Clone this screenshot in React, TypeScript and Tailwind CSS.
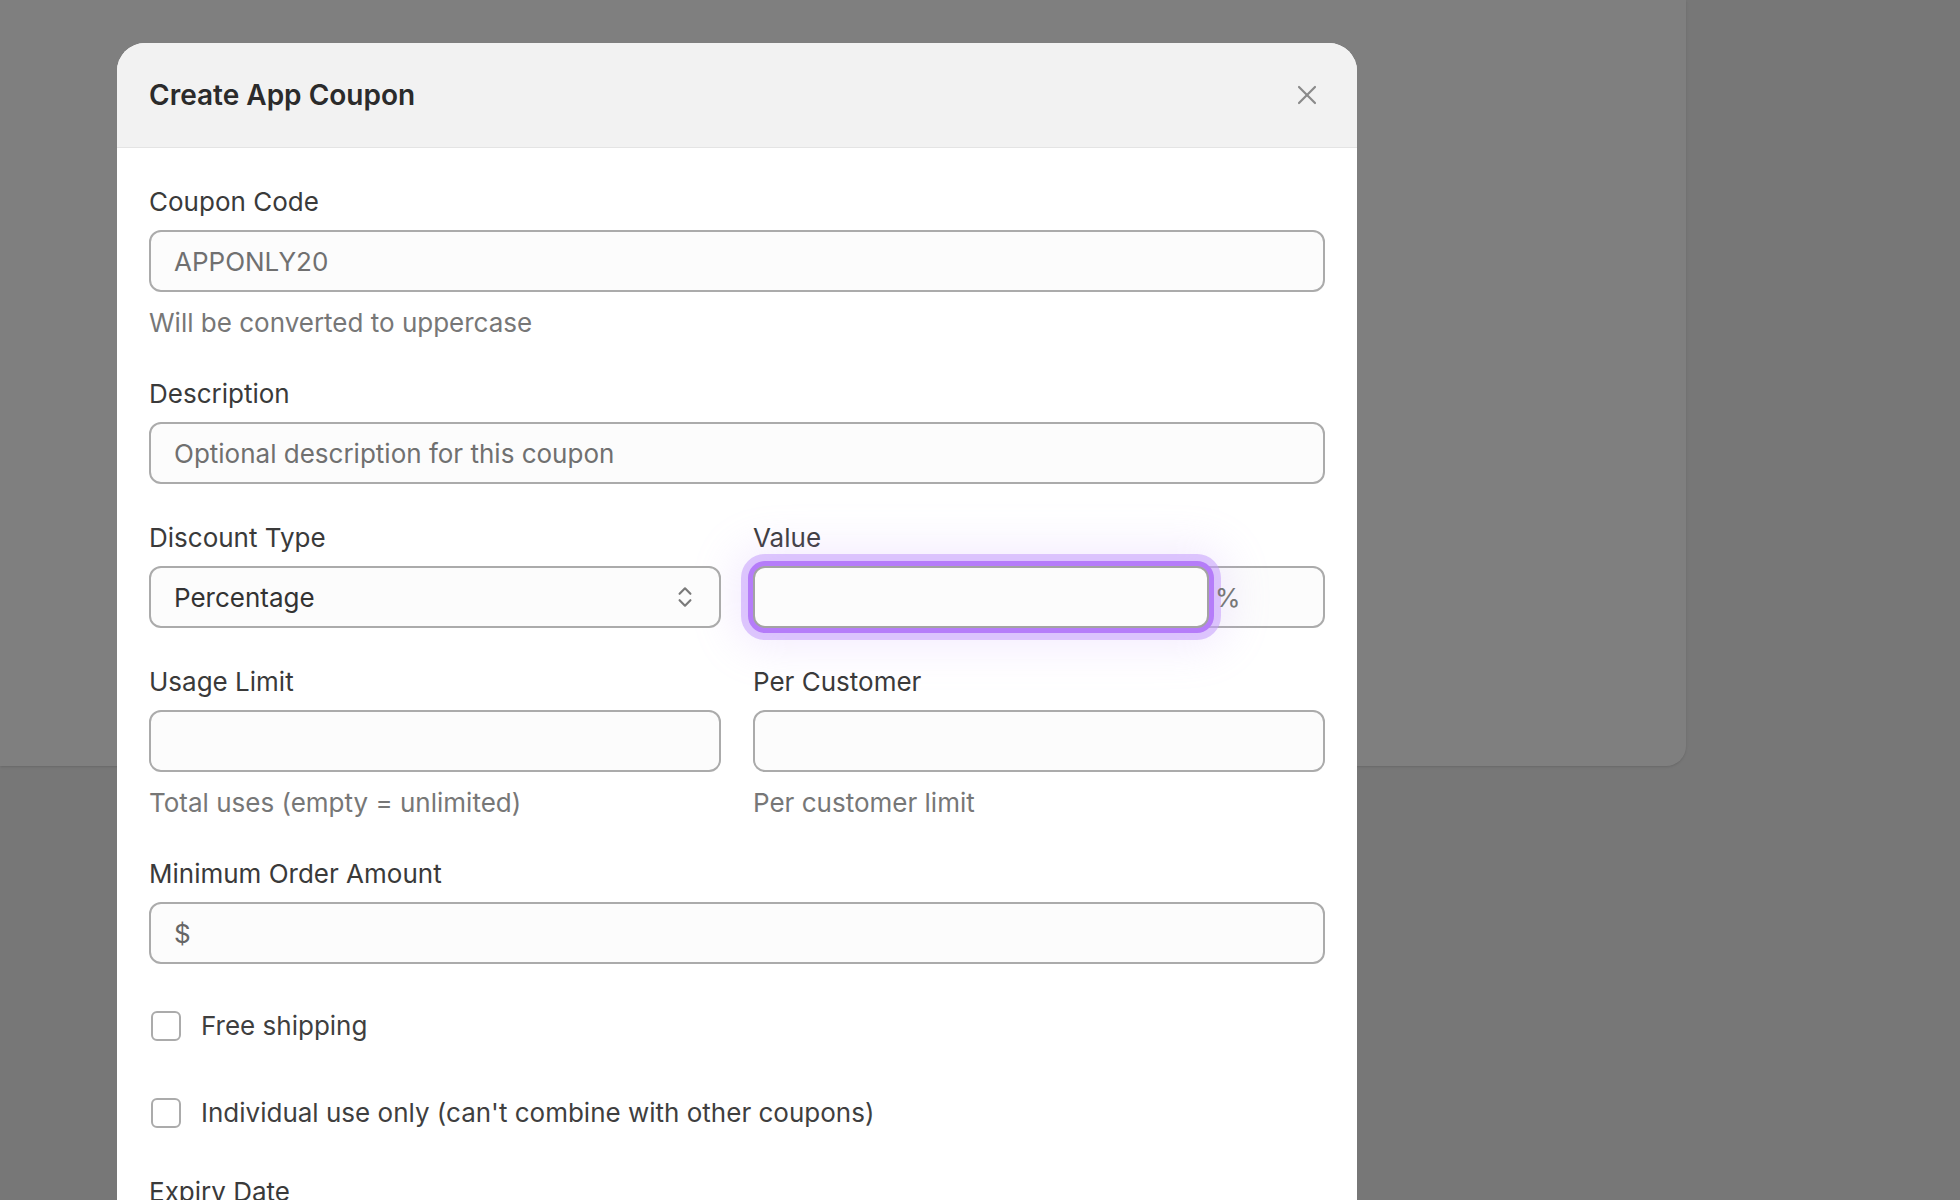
import React from "react";
import { X, ChevronsUpDown } from "lucide-react";

const font = { fontFamily: "Inter, 'Noto Sans', sans-serif" };

function Label({ children }: { children: React.ReactNode }) {
  return (
    <label className="block text-[26px] leading-[35px] text-[#3a3a3a] mb-[11px]">
      {children}
    </label>
  );
}

function Help({ children }: { children: React.ReactNode }) {
  return <p className="mt-[13px] text-[26px] leading-[35px] text-[#777777]">{children}</p>;
}

const inputCls =
  "block w-full h-[62px] rounded-[12px] border-2 border-[#ababab] bg-[#fcfcfc] px-[23px] text-[26px] text-[#333] placeholder:text-[#707070] outline-none";

function Checkbox({ label }: { label: string }) {
  return (
    <label className="flex items-center gap-[20px] py-2 text-[26px] leading-[35px] text-[#3f3f3f]">
      <input
        type="checkbox"
        className="appearance-none w-[30px] h-[30px] ml-[2px] rounded-[6px] border-2 border-[#ababab] bg-white"
      />
      {label}
    </label>
  );
}

export default function App() {
  return (
    <div className="relative h-[1200px] overflow-hidden bg-[#eeeeee]" style={font}>
      {/* page behind */}
      <div className="w-[1686px] h-[766px] bg-white rounded-br-[20px] shadow-sm" />

      {/* overlay */}
      <div className="absolute inset-0 bg-black/50" />

      {/* dialog */}
      <div className="absolute left-[117px] top-[43px] w-[1240px] rounded-[28px] bg-white overflow-hidden">
        <div className="flex items-center justify-between h-[105px] px-8 bg-[#f2f2f2] border-b border-[#e4e4e4]">
          <h2 className="text-[28px] font-semibold text-[#2b2b2b]">Create App Coupon</h2>
          <button className="text-[#8a8a8a] mr-[2px]">
            <X size={32} strokeWidth={1.6} />
          </button>
        </div>

        <div className="px-8 pt-[36px] pb-10 flex flex-col gap-[36px]">
          <div>
            <Label>Coupon Code</Label>
            <input className={inputCls} placeholder="APPONLY20" />
            <Help>Will be converted to uppercase</Help>
          </div>

          <div>
            <Label>Description</Label>
            <input className={inputCls} placeholder="Optional description for this coupon" />
          </div>

          <div className="grid grid-cols-2 gap-8">
            <div>
              <Label>Discount Type</Label>
              <div className="relative">
                <select className={inputCls + " appearance-none text-[#333]"} defaultValue="percentage">
                  <option value="percentage">Percentage</option>
                  <option value="fixed">Fixed Amount</option>
                </select>
                <ChevronsUpDown
                  size={26}
                  strokeWidth={2}
                  className="absolute right-[23px] top-1/2 -translate-y-1/2 text-[#7a7a7a] pointer-events-none"
                />
              </div>
            </div>
            <div>
              <Label>Value</Label>
              <div className="flex items-center h-[62px] rounded-[12px] border-2 border-[#ababab] bg-[#fcfcfc]">
                <input
                  className="h-[62px] w-[456px] -ml-[2px] rounded-[12px] border-2 border-[#a3a3a3] bg-[#fcfcfc] px-[23px] text-[26px] outline-none shadow-[0_0_0_5px_#b57cf9,0_0_0_12px_rgba(196,156,251,0.55),0_0_44px_18px_rgba(200,165,250,0.22)]"
                />
                <span className="ml-[6px] text-[26px] text-[#777]">%</span>
              </div>
            </div>
          </div>

          <div className="grid grid-cols-2 gap-8">
            <div>
              <Label>Usage Limit</Label>
              <input className={inputCls} />
              <Help>Total uses (empty = unlimited)</Help>
            </div>
            <div>
              <Label>Per Customer</Label>
              <input className={inputCls} />
              <Help>Per customer limit</Help>
            </div>
          </div>

          <div>
            <Label>Minimum Order Amount</Label>
            <div className="flex items-center h-[62px] rounded-[12px] border-2 border-[#ababab] bg-[#fcfcfc] px-[23px]">
              <span className="text-[26px] text-[#666]">$</span>
              <input className="flex-1 h-full bg-transparent pl-3 text-[26px] outline-none" />
            </div>
          </div>

          <Checkbox label="Free shipping" />
          <Checkbox label="Individual use only (can't combine with other coupons)" />

          <div>
            <Label>Expiry Date</Label>
            <input className={inputCls} />
          </div>
        </div>
      </div>
    </div>
  );
}
